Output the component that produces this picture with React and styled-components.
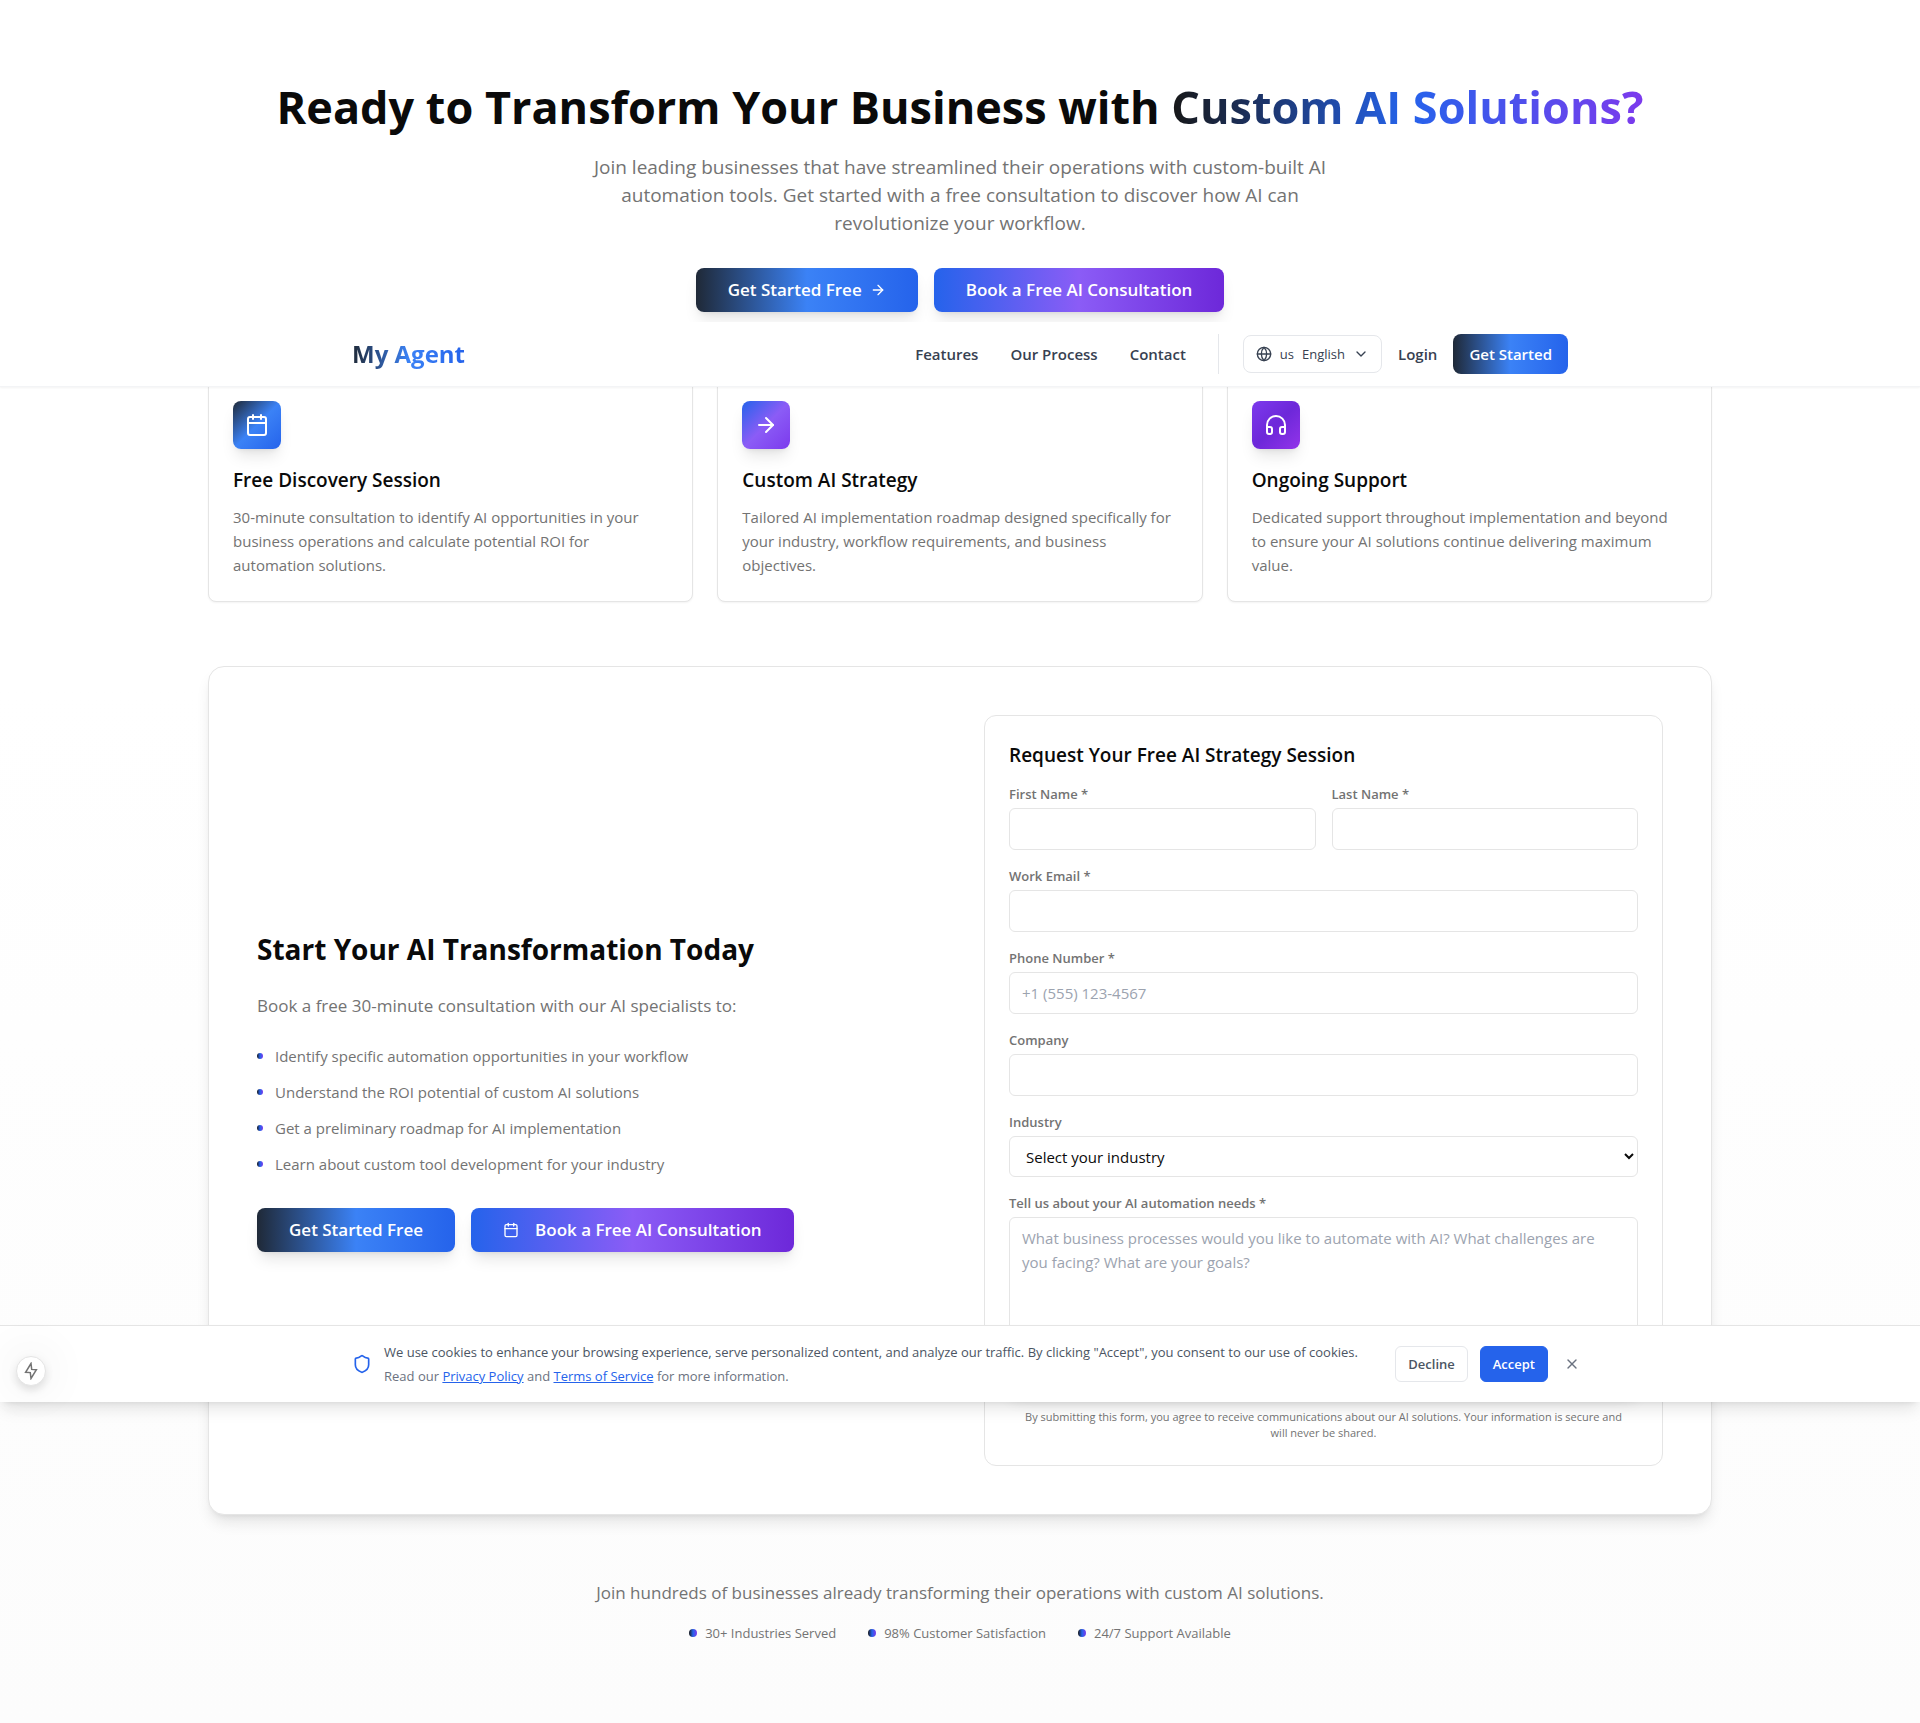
import React from 'react';
import styled, { createGlobalStyle, css } from 'styled-components';
import { ArrowRight, Calendar, ChevronDown, Globe, Headphones, Shield, X } from 'lucide-react';

const GlobalStyle = createGlobalStyle`
  *, *::before, *::after { box-sizing: border-box; }
  body {
    margin: 0;
    color: #0a0a0a;
    background: #ffffff;
    font-family: 'Open Sans', 'Noto Sans', sans-serif;
    font-size: 15px;
    line-height: 24px;
  }
  h1, h2, h3, p, ul { margin: 0; padding: 0; }
  ul { list-style: none; }
  button, input, select, textarea { font: inherit; color: inherit; }
`;

const gradients = {
  dark: '#1f2937, #3b82f6, #2563eb',
  violet: '#2563eb, #8b5cf6, #6d28d9',
  strategy: '#2563eb, #8b5cf6, #7c3aed',
  support: '#7c3aed, #6d28d9, #9333ea',
  accent: '#171717, #2563eb, #7c3aed',
};
const softShadow = '0 10px 15px -3px rgba(0, 0, 0, 0.1), 0 4px 6px -4px rgba(0, 0, 0, 0.1)';

const Page = styled.div`
  position: relative;
`;

const Section = styled.section`
  padding: 80px 16px;
  background: linear-gradient(to bottom, #ffffff 40%, #fcfcfc);
`;

const Container = styled.div`
  max-width: 1504px;
  margin: 0 auto;
  display: flex;
  flex-direction: column;
  gap: 64px;
`;

const Hero = styled.div`
  display: flex;
  flex-direction: column;
  align-items: center;
  text-align: center;
`;

const HeroTitle = styled.h1`
  font-size: 45px;
  line-height: 54px;
  font-weight: 700;
`;

const gradientText = css`
  color: transparent;
  background-clip: text;
  -webkit-background-clip: text;
`;

const Accent = styled.span`
  background-image: linear-gradient(to right, ${gradients.accent});
  ${gradientText}
`;

const HeroText = styled.p`
  max-width: 768px;
  margin: 19px 0 31px;
  font-size: 19px;
  line-height: 28px;
  color: #737373;
`;

const ButtonRow = styled.div`
  display: flex;
  gap: 16px;
`;

const GradientButton = styled.button`
  display: inline-flex;
  align-items: center;
  justify-content: center;
  gap: ${(p) => p.$gap || 8}px;
  width: ${(p) => (p.$wide ? '100%' : 'auto')};
  min-height: 44px;
  padding: 8px 32px;
  border: 0;
  border-radius: 8px;
  color: #ffffff;
  font-size: 17px;
  line-height: 28px;
  font-weight: 600;
  white-space: nowrap;
  background: linear-gradient(to right, ${(p) => gradients[p.$tone]});
  box-shadow: ${softShadow};
`;

const CardGrid = styled.div`
  display: grid;
  grid-template-columns: repeat(3, 1fr);
  gap: 24px;
`;

const Card = styled.article`
  padding: 24px;
  border: 1px solid #e5e5e5;
  border-radius: 8px;
  background: #ffffff;
  box-shadow: 0 1px 2px rgba(0, 0, 0, 0.05);
`;

const CardIcon = styled.div`
  display: grid;
  place-items: center;
  width: 48px;
  height: 48px;
  margin-bottom: 16px;
  border-radius: 8px;
  color: #ffffff;
  background: linear-gradient(to bottom right, ${(p) => gradients[p.$tone]});
  box-shadow: ${softShadow};
`;

const Heading = styled.h3`
  font-size: 19px;
  line-height: 30px;
  font-weight: 600;
`;

const CardText = styled.p`
  margin-top: 10px;
  padding-right: 4px;
  color: #737373;
`;

const Panel = styled.div`
  display: grid;
  grid-template-columns: 1fr 1fr;
  align-items: center;
  gap: 48px;
  padding: 48px;
  border: 1px solid #e5e5e5;
  border-radius: 16px;
  background: #ffffff;
  box-shadow: ${softShadow};
`;

const PanelTitle = styled.h2`
  font-size: 28px;
  line-height: 38px;
  font-weight: 700;
`;

const Lead = styled.p`
  font-size: 17px;
  line-height: 28px;
  color: #737373;
`;

const Pitch = styled.div`
  display: flex;
  flex-direction: column;
  gap: 24px;
`;

const BenefitList = styled.ul`
  display: flex;
  flex-direction: column;
  gap: 12px;
  margin-bottom: 8px;
  color: #737373;
`;

const Benefit = styled.li`
  display: flex;
  align-items: center;
  gap: 12px;
`;

const Dot = styled.span`
  flex: none;
  width: ${(p) => p.$size}px;
  height: ${(p) => p.$size}px;
  border-radius: 50%;
  background: linear-gradient(to right, ${gradients.accent});
`;

const Form = styled.form`
  display: flex;
  flex-direction: column;
  gap: 16px;
  padding: 24px;
  border: 1px solid #e5e5e5;
  border-radius: 12px;
  background: #ffffff;
`;

const FormTitle = styled(Heading)`
  margin-bottom: -2px;
`;

const FieldRow = styled.div`
  display: grid;
  grid-template-columns: 1fr 1fr;
  gap: 16px;
`;

const FieldBox = styled.div`
  display: flex;
  flex-direction: column;
  gap: 4px;
`;

const Label = styled.label`
  font-size: 13px;
  line-height: 20px;
  font-weight: 600;
  color: #737373;
`;

const control = css`
  width: 100%;
  border: 1px solid #e5e5e5;
  border-radius: 6px;
  background: #ffffff;
  &::placeholder { color: #9ca3af; opacity: 1; }
`;

const Input = styled.input`
  ${control}
  height: 42px;
  padding: 8px 12px;
`;

const Select = styled.select`
  ${control}
  height: 41px;
  padding: 8px 12px;
`;

const TextArea = styled.textarea`
  ${control}
  display: block;
  height: 116px;
  padding: 8px 20px 8px 12px;
  resize: none;
`;

const Consent = styled.p`
  padding: 0 12px;
  font-size: 11px;
  line-height: 16px;
  text-align: center;
  color: #737373;
`;

const Proof = styled.div`
  display: flex;
  flex-direction: column;
  align-items: center;
  gap: 16px;
`;

const StatRow = styled.ul`
  display: flex;
  gap: 32px;
  font-size: 13px;
  line-height: 20px;
  color: #737373;
`;

const Stat = styled.li`
  display: flex;
  align-items: center;
  gap: 8px;
`;

const Overlay = styled.div`
  position: absolute;
  top: 322px;
  left: 0;
  right: 0;
  height: 1080px;
  display: flex;
  flex-direction: column;
  justify-content: space-between;
  pointer-events: none;
  > * { pointer-events: auto; }
`;

const Header = styled.header`
  border-bottom: 1px solid #f3f4f6;
  background: #ffffff;
  box-shadow: 0 1px 2px rgba(0, 0, 0, 0.05);
`;

const HeaderInner = styled.div`
  display: flex;
  align-items: center;
  justify-content: space-between;
  max-width: 1280px;
  height: 64px;
  margin: 0 auto;
  padding: 0 32px;
`;

const Logo = styled.a`
  font-size: 24px;
  line-height: 32px;
  font-weight: 700;
  text-decoration: none;
  background-image: linear-gradient(to right, ${gradients.dark});
  ${gradientText}
`;

const Nav = styled.nav`
  display: flex;
  align-items: center;
  gap: 32px;
`;

const NavLink = styled.a`
  color: #374151;
  font-weight: 600;
  text-decoration: none;
`;

const Account = styled.div`
  display: flex;
  align-items: center;
  gap: 16px;
  padding-left: 24px;
  border-left: 1px solid #e5e7eb;
`;

const LanguageButton = styled.button`
  display: flex;
  align-items: center;
  gap: 8px;
  padding: 8px 12px;
  border: 1px solid #e5e7eb;
  border-radius: 8px;
  color: #374151;
  background: #ffffff;
  font-size: 13px;
  line-height: 20px;
`;

const StartButton = styled.button`
  padding: 8px 16px;
  border: 0;
  border-radius: 8px;
  color: #ffffff;
  font-weight: 600;
  background: linear-gradient(to right, ${gradients.dark});
`;

const CookieBar = styled.aside`
  position: relative;
  border-top: 1px solid #e5e5e5;
  background: #ffffff;
  box-shadow: ${softShadow};
`;

const CookieInner = styled.div`
  display: flex;
  align-items: center;
  gap: 12px;
  max-width: 1280px;
  height: 76px;
  margin: 0 auto;
  padding: 0 16px 0 32px;
  > svg { flex: none; color: #2563eb; }
`;

const CookieText = styled.div`
  flex: 1;
  font-size: 13px;
  line-height: 24px;
  color: #4b5563;
`;

const CookieNote = styled.p`
  color: #6b7280;
  a { color: #2563eb; text-decoration: underline; }
`;

const CookieButton = styled.button`
  height: 36px;
  padding: 0 12px;
  border: 1px solid ${(p) => (p.$primary ? '#2563eb' : '#e5e7eb')};
  border-radius: 6px;
  color: ${(p) => (p.$primary ? '#ffffff' : '#4b5563')};
  background: ${(p) => (p.$primary ? '#2563eb' : '#ffffff')};
  font-size: 13px;
  line-height: 20px;
  font-weight: 600;
`;

const CloseButton = styled.button`
  display: grid;
  padding: 4px;
  border: 0;
  color: #6b7280;
  background: none;
`;

const QuickButton = styled.button`
  position: absolute;
  left: 16px;
  bottom: 16px;
  display: grid;
  place-items: center;
  width: 30px;
  height: 30px;
  padding: 0;
  border: 1px solid #e5e5e5;
  border-radius: 50%;
  color: #737373;
  background: #ffffff;
  box-shadow: 0 0 48px rgba(0, 0, 0, 0.12), 0 4px 8px rgba(0, 0, 0, 0.12);
`;

const cards = [
  { title: 'Free Discovery Session', tone: 'dark', Icon: Calendar,
    text: '30-minute consultation to identify AI opportunities in your business operations and calculate potential ROI for automation solutions.' },
  { title: 'Custom AI Strategy', tone: 'strategy', Icon: ArrowRight,
    text: 'Tailored AI implementation roadmap designed specifically for your industry, workflow requirements, and business objectives.' },
  { title: 'Ongoing Support', tone: 'support', Icon: Headphones,
    text: 'Dedicated support throughout implementation and beyond to ensure your AI solutions continue delivering maximum value.' },
];

const benefits = [
  'Identify specific automation opportunities in your workflow',
  'Understand the ROI potential of custom AI solutions',
  'Get a preliminary roadmap for AI implementation',
  'Learn about custom tool development for your industry',
];

const stats = ['30+ Industries Served', '98% Customer Satisfaction', '24/7 Support Available'];

function BoltIcon() {
  return (
    <svg width="14" height="18" viewBox="0 0 14 18" fill="none" stroke="currentColor" strokeWidth="1.5" aria-hidden="true">
      <path d="M7 1.5 1.6 10.3 6.3 10.6 7 16.5 12.4 7.7 7.7 7.4Z" />
    </svg>
  );
}

function Field({ id, label, as: Control = Input, children, ...rest }) {
  return (
    <FieldBox>
      <Label htmlFor={id}>{label}</Label>
      <Control id={id} name={id} {...rest}>{children}</Control>
    </FieldBox>
  );
}

function RequestForm() {
  return (
    <Form onSubmit={(e) => e.preventDefault()}>
      <FormTitle>Request Your Free AI Strategy Session</FormTitle>
      <FieldRow>
        <Field id="firstName" label="First Name *" />
        <Field id="lastName" label="Last Name *" />
      </FieldRow>
      <Field id="email" label="Work Email *" type="email" />
      <Field id="phone" label="Phone Number *" type="tel" placeholder="+1 (555) 123-4567" />
      <Field id="company" label="Company" />
      <Field id="industry" label="Industry" as={Select}>
        <option>Select your industry</option>
      </Field>
      <Field
        id="needs"
        label="Tell us about your AI automation needs *"
        as={TextArea}
        placeholder="What business processes would you like to automate with AI? What challenges are you facing? What are your goals?"
      />
      <GradientButton $tone="dark" $wide type="submit" aria-label="Submit" />
      <Consent>
        By submitting this form, you agree to receive communications about our AI solutions. Your
        information is secure and will never be shared.
      </Consent>
    </Form>
  );
}

function SiteHeader() {
  return (
    <Header>
      <HeaderInner>
        <Logo href="#home">My Agent</Logo>
        <Nav>
          <NavLink href="#features">Features</NavLink>
          <NavLink href="#process">Our Process</NavLink>
          <NavLink href="#contact">Contact</NavLink>
          <Account>
            <LanguageButton type="button">
              <Globe size={16} />
              <span>us</span>
              <span>English</span>
              <ChevronDown size={16} />
            </LanguageButton>
            <NavLink href="#login">Login</NavLink>
            <StartButton type="button">Get Started</StartButton>
          </Account>
        </Nav>
      </HeaderInner>
    </Header>
  );
}

function CookieNotice() {
  return (
    <CookieBar>
      <CookieInner>
        <Shield size={20} />
        <CookieText>
          <p>
            We use cookies to enhance your browsing experience, serve personalized content, and
            analyze our traffic. By clicking "Accept", you consent to our use of cookies.
          </p>
          <CookieNote>
            Read our <a href="#privacy">Privacy Policy</a> and <a href="#terms">Terms of Service</a>{' '}
            for more information.
          </CookieNote>
        </CookieText>
        <CookieButton type="button">Decline</CookieButton>
        <CookieButton type="button" $primary>Accept</CookieButton>
        <CloseButton type="button" aria-label="Close"><X size={16} /></CloseButton>
      </CookieInner>
      <QuickButton type="button" aria-label="Quick actions"><BoltIcon /></QuickButton>
    </CookieBar>
  );
}

export default function App() {
  return (
    <Page>
      <GlobalStyle />
      <Section>
        <Container>
          <Hero>
            <HeroTitle>
              Ready to Transform Your Business with <Accent>Custom AI Solutions?</Accent>
            </HeroTitle>
            <HeroText>
              Join leading businesses that have streamlined their operations with custom-built AI
              automation tools. Get started with a free consultation to discover how AI can
              revolutionize your workflow.
            </HeroText>
            <ButtonRow>
              <GradientButton $tone="dark" type="button">
                Get Started Free <ArrowRight size={16} />
              </GradientButton>
              <GradientButton $tone="violet" type="button">Book a Free AI Consultation</GradientButton>
            </ButtonRow>
          </Hero>
          <CardGrid>
            {cards.map(({ title, tone, Icon, text }) => (
              <Card key={title}>
                <CardIcon $tone={tone}><Icon size={24} /></CardIcon>
                <Heading>{title}</Heading>
                <CardText>{text}</CardText>
              </Card>
            ))}
          </CardGrid>
          <Panel>
            <Pitch>
              <PanelTitle>Start Your AI Transformation Today</PanelTitle>
              <Lead>Book a free 30-minute consultation with our AI specialists to:</Lead>
              <BenefitList>
                {benefits.map((text) => (
                  <Benefit key={text}><Dot $size={6} />{text}</Benefit>
                ))}
              </BenefitList>
              <ButtonRow>
                <GradientButton $tone="dark" type="button">Get Started Free</GradientButton>
                <GradientButton $tone="violet" $gap={16} type="button">
                  <Calendar size={16} /> Book a Free AI Consultation
                </GradientButton>
              </ButtonRow>
            </Pitch>
            <RequestForm />
          </Panel>
          <Proof>
            <Lead>Join hundreds of businesses already transforming their operations with custom AI solutions.</Lead>
            <StatRow>
              {stats.map((text) => (
                <Stat key={text}><Dot $size={8} />{text}</Stat>
              ))}
            </StatRow>
          </Proof>
        </Container>
      </Section>
      <Overlay>
        <SiteHeader />
        <CookieNotice />
      </Overlay>
    </Page>
  );
}
